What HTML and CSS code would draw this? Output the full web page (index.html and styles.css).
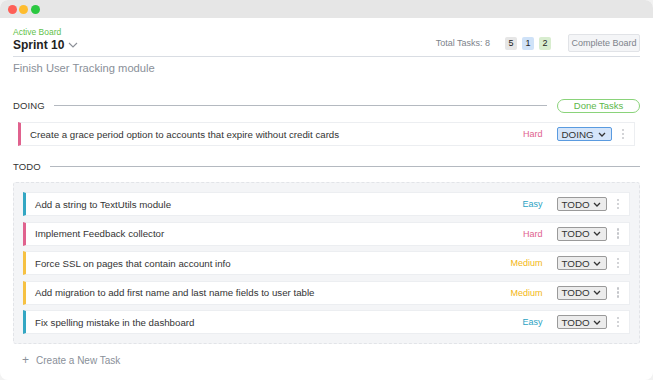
FILE: index.html
```html
<!DOCTYPE html>
<html>
<head>
<meta charset="utf-8">
<link rel="stylesheet" href="styles.css">
</head>
<body>
<div class="window">
  <div class="titlebar">
    <span class="dot red"></span><span class="dot yellow"></span><span class="dot green"></span>
  </div>
  <div class="content">
    <header class="board-header">
      <div class="board-title">
        <div class="eyebrow">Active Board</div>
        <div class="sprint">Sprint 10
          <svg class="chev" width="10" height="6" viewBox="0 0 10 6"><path d="M1 1l4 4 4-4" fill="none" stroke="#8c9098" stroke-width="1.1"/></svg>
        </div>
      </div>
      <div class="board-meta">
        <span class="total">Total Tasks: 8</span>
        <span class="badges">
          <span class="badge b-grey">5</span>
          <span class="badge b-blue">1</span>
          <span class="badge b-green">2</span>
        </span>
        <button class="btn-complete">Complete Board</button>
      </div>
    </header>
    <div class="subtitle">Finish User Tracking module</div>

    <div class="section-head">
      <span class="section-name">DOING</span>
      <span class="rule"></span>
      <button class="btn-done">Done Tasks</button>
    </div>
    <div class="doing-list">
      <div class="card hard">
        <span class="task">Create a grace period option to accounts that expire without credit cards</span>
        <span class="level l-hard">Hard</span>
        <span class="select sel-doing">DOING<svg width="8" height="5" viewBox="0 0 8 5"><path d="M1 1l3 3 3-3" fill="none" stroke="#333" stroke-width="1.3"/></svg></span>
        <span class="kebab"><i></i><i></i><i></i></span>
      </div>
    </div>

    <div class="section-head todo-head">
      <span class="section-name">TODO</span>
      <span class="rule"></span>
    </div>
    <div class="todo-box">
      <div class="card easy">
        <span class="task">Add a string to TextUtils module</span>
        <span class="level l-easy">Easy</span>
        <span class="select">TODO<svg width="8" height="5" viewBox="0 0 8 5"><path d="M1 1l3 3 3-3" fill="none" stroke="#333" stroke-width="1.3"/></svg></span>
        <span class="kebab"><i></i><i></i><i></i></span>
      </div>
      <div class="card hard">
        <span class="task">Implement Feedback collector</span>
        <span class="level l-hard">Hard</span>
        <span class="select">TODO<svg width="8" height="5" viewBox="0 0 8 5"><path d="M1 1l3 3 3-3" fill="none" stroke="#333" stroke-width="1.3"/></svg></span>
        <span class="kebab"><i></i><i></i><i></i></span>
      </div>
      <div class="card medium">
        <span class="task">Force SSL on pages that contain account info</span>
        <span class="level l-medium">Medium</span>
        <span class="select">TODO<svg width="8" height="5" viewBox="0 0 8 5"><path d="M1 1l3 3 3-3" fill="none" stroke="#333" stroke-width="1.3"/></svg></span>
        <span class="kebab"><i></i><i></i><i></i></span>
      </div>
      <div class="card medium">
        <span class="task">Add migration to add first name and last name fields to user table</span>
        <span class="level l-medium">Medium</span>
        <span class="select">TODO<svg width="8" height="5" viewBox="0 0 8 5"><path d="M1 1l3 3 3-3" fill="none" stroke="#333" stroke-width="1.3"/></svg></span>
        <span class="kebab"><i></i><i></i><i></i></span>
      </div>
      <div class="card easy">
        <span class="task">Fix spelling mistake in the dashboard</span>
        <span class="level l-easy">Easy</span>
        <span class="select">TODO<svg width="8" height="5" viewBox="0 0 8 5"><path d="M1 1l3 3 3-3" fill="none" stroke="#333" stroke-width="1.3"/></svg></span>
        <span class="kebab"><i></i><i></i><i></i></span>
      </div>
    </div>

    <div class="create">
      <span class="plus">+</span>
      <span>Create a New Task</span>
    </div>
  </div>
</div>
</body>
</html>
```

FILE: styles.css
```css
* { box-sizing: border-box; }
html, body {
  margin: 0;
  padding: 0;
  background: #f2f2f2;
  font-family: "Liberation Sans", Arial, sans-serif;
  color: #333;
}
.window {
  width: 653px;
  height: 380px;
  background: #fff;
  border-radius: 8px;
  overflow: hidden;
  display: flex;
  flex-direction: column;
}
.titlebar {
  height: 18px;
  background: #e6e6e6;
  display: flex;
  align-items: center;
  gap: 2.5px;
  padding-left: 7.5px;
  flex-shrink: 0;
}
.dot {
  width: 9px;
  height: 9px;
  border-radius: 50%;
  display: inline-block;
}
.red { background: #fe5f57; }
.yellow { background: #febc2e; }
.green { background: #2ac840; }

.content {
  padding: 0 13px;
  display: flex;
  flex-direction: column;
}
.board-header {
  display: flex;
  justify-content: space-between;
  align-items: flex-end;
  padding-top: 9px;
  padding-bottom: 3px;
  border-bottom: 1px solid #d9dde3;
}
.eyebrow {
  font-size: 8.5px;
  line-height: 10px;
  color: #5fbf4a;
}
.sprint {
  font-size: 12px;
  line-height: 16px;
  font-weight: bold;
  color: #222;
  display: flex;
  align-items: center;
  gap: 4px;
}
.board-meta {
  display: flex;
  align-items: center;
  padding-bottom: 1px;
}
.total {
  font-size: 9px;
  color: #7d838b;
  margin-right: 15px;
}
.badges {
  display: flex;
  gap: 5px;
  margin-right: 17px;
}
.badge {
  width: 12px;
  height: 13px;
  border-radius: 2px;
  font-size: 9px;
  line-height: 13px;
  text-align: center;
  color: #222;
}
.b-grey { background: #e6e6e6; }
.b-blue { background: #cfe2f8; }
.b-green { background: #d8edcf; }
.btn-complete {
  font-family: inherit;
  font-size: 9px;
  color: #7d838b;
  background: #f4f5f7;
  border: 1px solid #e1e3e7;
  border-radius: 2px;
  height: 18px;
  width: 72px;
  padding: 0;
}
.subtitle {
  margin-top: 3px;
  font-size: 11.2px;
  line-height: 16px;
  color: #8a9099;
}
.section-head {
  display: flex;
  align-items: center;
  height: 15px;
  margin-top: 22px;
}
.section-name {
  font-size: 9.5px;
  font-weight: 500;
  color: #333;
  letter-spacing: 0.1px;
}
.rule {
  flex: 1;
  height: 1px;
  background: #b4b9c0;
  margin-left: 9px;
}
.todo-head { margin-top: 13px; }
.btn-done {
  font-family: inherit;
  font-size: 9.5px;
  color: #5cb74a;
  background: #fff;
  border: 1px solid #8ad37a;
  border-radius: 8px;
  height: 14px;
  width: 83px;
  margin-left: 10px;
  padding: 0;
  line-height: 12px;
}
.doing-list {
  margin: 9px 5px 0 5px;
}
.card {
  height: 24px;
  background: #fff;
  border: 1px solid #eceef1;
  border-left: 3px solid #ccc;
  display: flex;
  align-items: center;
  padding-left: 9px;
  font-size: 9.7px;
}
.card.hard { border-left-color: #e0628e; }
.card.easy { border-left-color: #34a7c3; }
.card.medium { border-left-color: #f6c142; }
.task {
  flex: 1;
  color: #333;
  white-space: nowrap;
}
.level {
  font-size: 9px;
  margin-right: 14px;
}
.l-hard { color: #e0628e; }
.l-easy { color: #2ba3c3; }
.l-medium { color: #f3b614; }
.select {
  display: flex;
  align-items: center;
  justify-content: space-between;
  width: 50px;
  height: 14px;
  padding: 0 5px 0 4px;
  font-size: 9.8px;
  color: #333;
  background: #ececec;
  border: 1px solid #9a9a9a;
  border-radius: 2px;
}
.sel-doing {
  width: 55px;
  background: #d5e5fa;
  border-color: #5a9be0;
}
.kebab {
  display: flex;
  flex-direction: column;
  gap: 1.5px;
  margin: 0 10px 0 10px;
}
.kebab i {
  width: 2.5px;
  height: 2.5px;
  border-radius: 50%;
  background: #c4c6ca;
  display: block;
}
.todo-box {
  margin-top: 8px;
  background: #f4f5f7;
  border: 1px dashed #e2e4e8;
  border-radius: 3px;
  padding: 9px;
  display: flex;
  flex-direction: column;
  gap: 5.5px;
}
.create {
  display: flex;
  align-items: center;
  margin-top: 9px;
  padding-left: 9px;
  height: 14px;
  font-size: 10px;
  color: #8a9099;
}
.plus {
  font-size: 12px;
  margin-right: 7px;
  color: #8a9099;
}
```
